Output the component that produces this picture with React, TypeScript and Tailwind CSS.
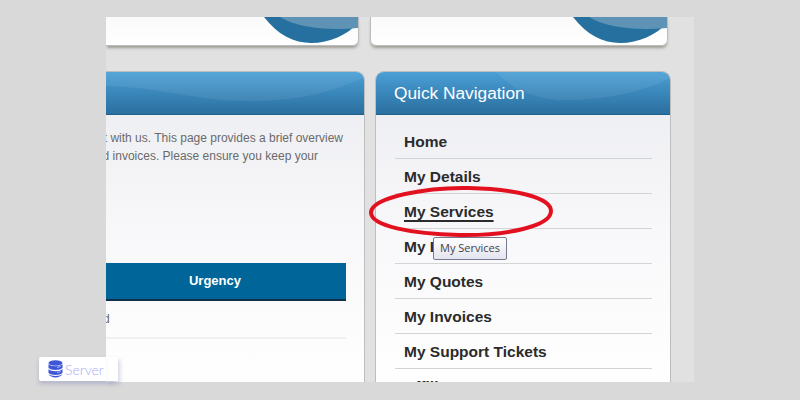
import React from 'react';

const navItems = ['Home', 'My Details', 'My Services', 'My Invoices', 'My Quotes', 'My Invoices', 'My Support Tickets', 'Affiliates'];
const sans = 'font-["Liberation_Sans",Arial,sans-serif]';

function CardBlob() {
  return (
    <svg width="94" height="29" viewBox="0 0 94 29" className="absolute right-0 top-0">
      <path d="M0 0 C14 18 30 26 47 26 C66 26 83 18 94 6 L94 0 Z" fill="#26709f" />
      <path d="M16 0 C32 10 62 14 94 11 L94 0 Z" fill="#5f93b6" />
    </svg>
  );
}

function HeaderWave({ width, d }: { width: number; d: string }) {
  return (
    <svg width={width} height="43" viewBox={`0 0 ${width} 43`} className="absolute left-0 top-0">
      <path d={d} fill="#ffffff" fillOpacity="0.07" />
    </svg>
  );
}

function Panel({ className, children }: { className: string; children: React.ReactNode }) {
  return (
    <div className={`border border-[#bdbdbd] rounded-t-[9px] overflow-hidden bg-gradient-to-b from-[#ebecf0] via-[#f8f8fa] via-50% to-white ${className}`}>
      {children}
    </div>
  );
}

export default function App() {
  return (
    <div className={`relative w-[800px] h-[400px] bg-[#d9d9d9] pt-[17px] pl-[106px] overflow-hidden ${sans}`}>
      <div className="w-[588px] h-[365px] bg-[#e1e1e1] overflow-hidden">
        {/* top cards, cut off by the crop */}
        <div className="flex h-[29px]">
          <div className="relative w-[253px] h-[29px] bg-gradient-to-b from-[#fafafa] to-white border-b border-r border-[#bcbcbc] rounded-br-[6px] overflow-hidden shadow-[0_3px_3px_-1px_rgba(90,85,70,0.5)]">
            <CardBlob />
          </div>
          <div className="relative ml-[11px] w-[298px] h-[29px] bg-gradient-to-b from-[#fafafa] to-white border-b border-x border-[#bcbcbc] rounded-b-[6px] overflow-hidden shadow-[0_3px_3px_-1px_rgba(90,85,70,0.5)]">
            <CardBlob />
          </div>
        </div>

        <div className="flex mt-[25px] items-start">
          {/* main panel */}
          <Panel className="w-[259px] h-[320px] border-l-0 rounded-tl-none">
            <div className="relative h-[43px] bg-gradient-to-b from-[#4a9fd6] to-[#2a6f9f] border-b border-[#21608c]">
              <HeaderWave width={259} d="M0 0 L0 14 C50 14 90 30 150 29 C200 28 230 18 259 5 L259 0 Z" />
            </div>
            <div className="flex flex-col items-end pt-[14px] text-[12px] leading-[18px] text-[#6a6a6a] whitespace-nowrap">
              <p className="mr-[21px]">pleased to have an account with us. This page provides a brief overview</p>
              <p className="mr-[46px]">tickets and invoices. Please ensure you keep your</p>
            </div>
            <div className="mt-[98px] mr-[18px] h-[38px] bg-[#006699] border-b-2 border-[#10304a] flex items-center justify-end">
              <span className="w-[140px] ml-auto mr-[61px] text-center text-[13px] font-bold text-white">Urgency</span>
            </div>
            <div className="mr-[18px] h-[38px] border-b-2 border-[#f0f0f2] flex items-center text-[12px] text-[#6a6a6a]">
              <span className="-ml-[3px]">d</span>
            </div>
          </Panel>

          {/* quick navigation */}
          <Panel className="ml-[10px] w-[296px] h-[320px]">
            <div className="relative h-[43px] bg-gradient-to-b from-[#4a9fd6] to-[#2a6f9f] border-b border-[#21608c] flex items-center pl-[18px] pt-[1px]">
              <HeaderWave width={296} d="M120 0 C140 22 170 30 200 28 C240 26 270 18 296 5 L296 0 Z" />
              <h2 className="relative text-[17.3px] text-white">Quick Navigation</h2>
            </div>
            <ul className="ml-[19px] mr-[18px] pt-[9px]">
              {navItems.map((item, i) => (
                <li key={i} className="h-[35px] border-b border-[#d4d4d6] flex items-center pl-[9px] pt-[2px]">
                  <a className={`text-[15.5px] font-bold text-[#2b2b2b] ${item === 'My Services' ? 'underline decoration-2 underline-offset-[3px]' : ''}`}>
                    {item}
                  </a>
                </li>
              ))}
            </ul>
          </Panel>
        </div>
      </div>

      {/* red hand drawn ring */}
      <svg width="190" height="56" viewBox="0 0 190 56" className="absolute left-[367px] top-[184px]">
        <path d="M4 28 C6 13 60 3 102 4 C150 5 184 14 184 27 C184 42 140 52 92 51 C45 50 3 42 4 28 Z" fill="none" stroke="#e3101f" strokeWidth="4" />
      </svg>

      {/* tooltip */}
      <div className='absolute left-[433px] top-[237px] w-[74px] h-[23px] flex items-center justify-center rounded-[2px] border border-[#767a8e] bg-gradient-to-b from-white to-[#e3e4ef] text-[11px] text-[#444] font-["Open_Sans",sans-serif]'>
        My Services
      </div>

      {/* watermark badge */}
      <div className="absolute left-[39px] top-[357px] w-[74px] h-[24px] bg-white rounded-l-[2px] shadow-[0_3px_4px_rgba(110,115,170,0.35)] flex items-center pl-[9px] gap-[3px]">
        <div className="absolute right-[-5px] top-0 w-[10px] h-[24px] bg-white -skew-x-[18px] shadow-[2px_3px_4px_rgba(110,115,170,0.3)]" />
        <svg width="15" height="18" viewBox="0 0 15 18" className="relative">
          <ellipse cx="7.5" cy="3" rx="7" ry="2.8" fill="#3f57d6" />
          <path d="M0.5 4 C3 7 12 7 14.5 4 V8 C12 10.5 3 10.5 0.5 8 Z" fill="#3f57d6" />
          <path d="M0.5 9 C3 12 12 12 14.5 9 V13 C12 15.5 3 15.5 0.5 13 Z" fill="#3f57d6" />
          <path d="M0.5 14 C3 16.5 12 16.5 14.5 14 C12 18.5 3 18.5 0.5 14 Z" fill="#3f57d6" />
          <path d="M9 7.5 L12.5 6.5 M9 12.5 L12.5 11.5" stroke="#c9d2ff" strokeWidth="0.8" />
        </svg>
        <span className='relative -ml-[1px] text-[14px] font-light text-[#a8aef5] font-["Lato",sans-serif]'>Server</span>
      </div>
    </div>
  );
}
